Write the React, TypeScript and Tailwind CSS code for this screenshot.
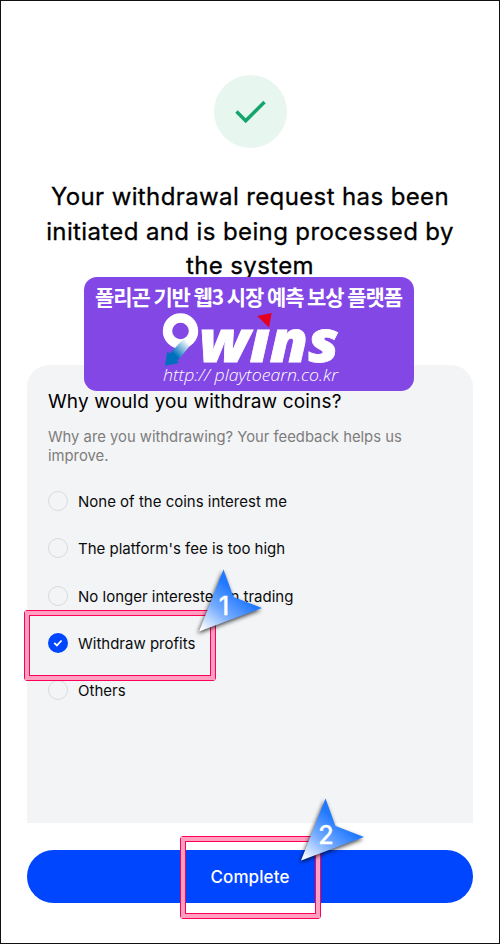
const options = [
  { label: "None of the coins interest me" },
  { label: "The platform's fee is too high" },
  { label: "No longer interested in trading" },
  { label: "Withdraw profits", checked: true },
  { label: "Others" },
];

function Radio({ checked }: { checked?: boolean }) {
  if (!checked) {
    return <span className="h-5 w-5 rounded-full border border-[#d9dadc]" />;
  }
  return (
    <span className="flex h-5 w-5 items-center justify-center rounded-full bg-[#0046ff]">
      <svg width="20" height="20" viewBox="0 0 20 20" fill="none">
        <path d="M6.2 9.9L8.9 12.4L13.6 7.5" stroke="white" strokeWidth="1.8" />
      </svg>
    </span>
  );
}

function Pointer({ number }: { number: number }) {
  const id = `pointer-${number}`;
  return (
    <svg width="80" height="80" viewBox="0 0 80 80" className="overflow-visible">
      <defs>
        <linearGradient id={id} gradientUnits="userSpaceOnUse" x1="12" y1="70" x2="44" y2="30">
          <stop offset="0" stopColor="#ffffff" />
          <stop offset="0.5" stopColor="#78adff" />
          <stop offset="1" stopColor="#1f78ff" />
        </linearGradient>
      </defs>
      <path
        d="M33.5 9.5L43.5 37L72 48L9 71.5Z"
        fill={`url(#${id})`}
        className="drop-shadow-[-1px_2px_2px_rgba(0,0,0,0.75)]"
      />
      <text
        x="34"
        y="54.5"
        textAnchor="middle"
        fill="white"
        stroke="white"
        strokeWidth="0.3"
        className="font-['Inter'] text-[25px] font-medium"
      >
        {number}
      </text>
    </svg>
  );
}

function Frame({ className }: { className: string }) {
  return (
    <div className={`absolute rounded-[3px] border border-[#ff0059] bg-transparent ${className}`}>
      <div className="h-full w-full border-4 border-[#ffa0c0]">
        <div className="h-full w-full border border-[#ff0059]" />
      </div>
    </div>
  );
}

function Banner() {
  return (
    <div className="absolute left-[83px] top-[276px] h-[114px] w-[330px] rounded-[13px] bg-[#8247e5]">
      <svg width="330" height="114" viewBox="0 0 330 114">
        <defs>
          <linearGradient id="tail" gradientUnits="userSpaceOnUse" x1="104" y1="65" x2="91" y2="78">
            <stop offset="0" stopColor="#ffffff" />
            <stop offset="1" stopColor="#0070bd" />
          </linearGradient>
        </defs>
        <text
          x="11"
          y="28"
          textLength="308"
          lengthAdjust="spacing"
          fill="white"
          className="font-['Noto_Sans_CJK_KR',sans-serif] text-[21px] font-bold"
        >
          폴리곤 기반 웹3 시장 예측 보상 플랫폼
        </text>
        <circle cx="96.5" cy="54" r="13" fill="none" stroke="white" strokeWidth="9.4" />
        <path
          d="M102.5 60L114 56Q112 61 109.3 64.5L95.3 81.7L93 83.3L95 86L81 88.7L83.3 74.3L86 76.7L95 66.5Z"
          fill="url(#tail)"
        />
        <text
          x="115"
          y="84.5"
          textLength="140"
          lengthAdjust="spacingAndGlyphs"
          fill="white"
          stroke="white"
          strokeWidth="0.8"
          className="font-['Open_Sans'] text-[59px] font-extrabold italic"
        >
          wins
        </text>
        <path d="M168 36H196V51H168Z" fill="#8247e5" />
        <path d="M173.3 39L187.7 36L185 50.5Z" fill="#e60020" />
        <text
          x="79"
          y="104"
          textLength="175"
          lengthAdjust="spacingAndGlyphs"
          fill="white"
          className="font-['Open_Sans'] text-[16px] font-light italic"
        >
          http:// playtoearn.co.kr
        </text>
      </svg>
    </div>
  );
}

export default function App() {
  return (
    <div className="relative flex h-[944px] w-[500px] flex-col items-center border border-[#111] bg-white font-['Inter',sans-serif] text-[#0a0b0d]">
      <div className="mt-[74px] flex h-[73px] w-[73px] shrink-0 items-center justify-center rounded-full bg-[#e7f6ef]">
        <svg width="73" height="73" viewBox="0 0 73 73" fill="none">
          <path d="M22.5 36.5L31.7 45.8L50.5 27" stroke="#12a66c" strokeWidth="3.4" />
        </svg>
      </div>
      <h1 className="mt-[32px] whitespace-nowrap text-center text-[24px] font-normal leading-[34.7px] tracking-[0.38px] text-black [-webkit-text-stroke:0.3px_black]">
        Your withdrawal request has been
        <br />
        initiated and is being processed by
        <br />
        the system
      </h1>
      <div className="mt-[81px] h-[458px] w-[446px] shrink-0 rounded-t-[22px] bg-[#f3f4f6] px-[21px]">
        <h2 className="mt-[23px] whitespace-nowrap text-[19px] leading-7 tracking-[0.15px] text-black">
          Why would you withdraw coins?
        </h2>
        <p className="mt-[12px] whitespace-nowrap text-[14.8px] leading-[18.5px] text-[#7d7d7d]">
          Why are you withdrawing? Your feedback helps us
          <br />
          improve.
        </p>
        <ul className="mt-[26px] flex flex-col gap-[27.3px]">
          {options.map((option) => (
            <li key={option.label} className="flex h-5 items-center gap-[10px]">
              <Radio checked={option.checked} />
              <span className="mt-[2px] whitespace-nowrap text-[15px] leading-5">{option.label}</span>
            </li>
          ))}
        </ul>
      </div>
      <button className="mt-[27px] h-[53px] w-[446px] shrink-0 rounded-full bg-[#0046ff] pt-[2px] text-[17px] font-medium tracking-[0.1px] text-white">
        Complete
      </button>

      <Banner />
      <Frame className="left-[23px] top-[609px] h-[71px] w-[192px]" />
      <Frame className="left-[179px] top-[835px] h-[83px] w-[141px]" />
      <div className="absolute left-[189px] top-[559px]">
        <Pointer number={1} />
      </div>
      <div className="absolute left-[291px] top-[788px]">
        <Pointer number={2} />
      </div>
    </div>
  );
}
